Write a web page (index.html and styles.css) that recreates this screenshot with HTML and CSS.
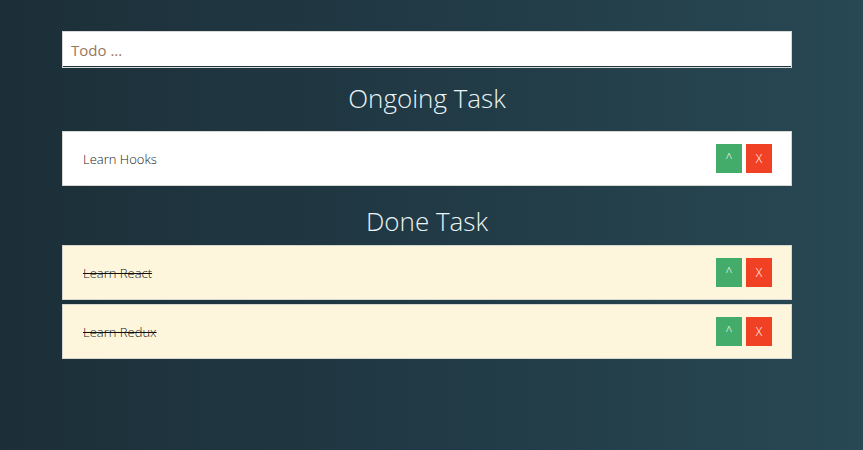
FILE: index.html
```html
<!DOCTYPE html>
<html>
<head>
<meta charset="utf-8">
<link rel="stylesheet" href="styles.css">
</head>
<body>
<div class="app">
  <input class="todo-input" type="text" placeholder="Todo ...">
  <h2 class="section-title first">Ongoing Task</h2>
  <div class="task">
    <span class="task-text">Learn Hooks</span>
    <div class="actions">
      <button class="btn btn-up">^</button>
      <button class="btn btn-del">X</button>
    </div>
  </div>
  <h2 class="section-title second">Done Task</h2>
  <div class="task done">
    <span class="task-text">Learn React</span>
    <div class="actions">
      <button class="btn btn-up">^</button>
      <button class="btn btn-del">X</button>
    </div>
  </div>
  <div class="task done">
    <span class="task-text">Learn Redux</span>
    <div class="actions">
      <button class="btn btn-up">^</button>
      <button class="btn btn-del">X</button>
    </div>
  </div>
</div>
</body>
</html>
```
FILE: styles.css
```css
html, body {
  margin: 0;
  height: 100%;
}
body {
  background: linear-gradient(to right, #1c2f38 0%, #213a45 50%, #284853 100%);
  font-family: "Open Sans", "Liberation Sans", sans-serif;
}
.app {
  width: 730px;
  margin-left: 62px;
  padding-top: 31px;
}
.todo-input {
  display: block;
  box-sizing: border-box;
  width: 730px;
  height: 37px;
  margin: 0;
  padding: 0 8px;
  border: 1px solid #d8d8d8;
  box-shadow: inset 0 -1px 0 #1d3540;
  background: #fff;
  font-family: "Open Sans", "Liberation Sans", sans-serif;
  font-size: 15px;
  color: #333;
  outline: none;
}
.todo-input::placeholder {
  color: #9a7560;
  opacity: 1;
}
.section-title {
  margin: 0;
  text-align: center;
  font-weight: 300;
  font-size: 26px;
  line-height: 39px;
  color: #eaf4f7;
}
.section-title.first {
  margin-top: 11px;
  margin-bottom: 13px;
}
.section-title.second {
  margin-top: 16px;
  margin-bottom: 4px;
}
.task {
  box-sizing: border-box;
  height: 55px;
  display: flex;
  align-items: center;
  justify-content: space-between;
  padding: 0 19px 0 20px;
  background: #fff;
  border: 1px solid #d6d6d0;
}
.task.done {
  background: #fdf6dc;
  margin-bottom: 4px;
}
.task-text {
  font-size: 13px;
  font-weight: 300;
  color: #222;
}
.done .task-text {
  text-decoration: line-through;
  text-decoration-color: #111;
}
.actions {
  display: flex;
  gap: 4px;
}
.btn {
  width: 26px;
  height: 29px;
  padding: 0;
  border: none;
  color: #fff;
  font-family: "Open Sans", "Liberation Sans", sans-serif;
  font-size: 12px;
  font-weight: 300;
  line-height: 29px;
}
.btn-up {
  background: #43ac6a;
}
.btn-del {
  background: #f04124;
}
```
